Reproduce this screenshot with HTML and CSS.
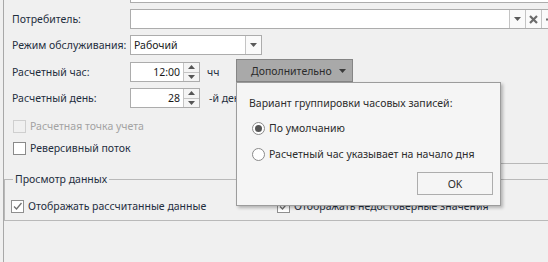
FILE: index.html
```html
<!DOCTYPE html>
<html lang="ru">

<head>
    <meta charset="UTF-8">
    <link rel="stylesheet" href="styles.css">
    <title>Параметры</title>
</head>

<body>

    <div class="frame">
        <div class="row row-top">
            <span class="label"></span>
            <div class="field wide"></div>
        </div>

        <div class="row">
            <span class="label">Потребитель:</span>
            <div class="field wide">
                <span class="field-text lookup-text"></span>
                <span class="btn-cell"><svg width="7" height="4" viewBox="0 0 7 4"><path d="M0 0h7L3.5 4z" fill="#5a5a5a"/></svg></span>
                <span class="btn-cell"><svg width="9" height="9" viewBox="0 0 9 9"><path d="M1 1l7 7M8 1L1 8" stroke="#6b6b6b" stroke-width="2.2"/></svg></span>
                <span class="btn-cell"><svg width="9" height="9" viewBox="0 0 9 9"><path d="M1 4.5h7" stroke="#6b6b6b" stroke-width="2"/></svg></span>
            </div>
        </div>

        <div class="row">
            <span class="label">Режим обслуживания:</span>
            <div class="field combo">
                <span class="field-text">Рабочий</span>
                <span class="btn-cell"><svg width="7" height="4" viewBox="0 0 7 4"><path d="M0 0h7L3.5 4z" fill="#5a5a5a"/></svg></span>
            </div>
        </div>

        <div class="row row-hour">
            <span class="label">Расчетный час:</span>
            <div class="field spin">
                <span class="field-text num">12:00</span>
                <span class="spin-btns">
                    <span class="spin-up"><svg width="7" height="4" viewBox="0 0 7 4"><path d="M0 4h7L3.5 0z" fill="#555"/></svg></span>
                    <span class="spin-down"><svg width="7" height="4" viewBox="0 0 7 4"><path d="M0 0h7L3.5 4z" fill="#555"/></svg></span>
                </span>
            </div>
            <span class="unit">чч</span>
            <button class="more-btn"><span>Дополнительно</span><svg width="7" height="4" viewBox="0 0 7 4"><path d="M0 0h7L3.5 4z" fill="#3a3a3a"/></svg></button>
        </div>

        <div class="row">
            <span class="label">Расчетный день:</span>
            <div class="field spin">
                <span class="field-text num">28</span>
                <span class="spin-btns">
                    <span class="spin-up"><svg width="7" height="4" viewBox="0 0 7 4"><path d="M0 4h7L3.5 0z" fill="#555"/></svg></span>
                    <span class="spin-down"><svg width="7" height="4" viewBox="0 0 7 4"><path d="M0 0h7L3.5 4z" fill="#555"/></svg></span>
                </span>
            </div>
            <span class="unit unit-day">-й день</span>
        </div>

        <label class="check-row check-disabled">
            <span class="check-box"></span>
            Расчетная точка учета
        </label>

        <label class="check-row">
            <span class="check-box"></span>
            Реверсивный поток
        </label>

        <div class="divider-right"></div>

        <fieldset class="group">
            <legend>Просмотр данных</legend>
            <div class="group-checks">
                <label class="check-row check-first">
                    <span class="check-box checked"><svg width="11" height="11" viewBox="0 0 11 11"><path d="M2 5.5l2.5 2.5L9.5 2" fill="none" stroke="#707070" stroke-width="1.3"/></svg></span>
                    Отображать рассчитанные данные
                </label>
                <label class="check-row">
                    <span class="check-box checked"><svg width="11" height="11" viewBox="0 0 11 11"><path d="M2 5.5l2.5 2.5L9.5 2" fill="none" stroke="#707070" stroke-width="1.3"/></svg></span>
                    Отображать недостоверные значения
                </label>
            </div>
        </fieldset>
    </div>

    <div class="popup">
        <div class="popup-title">Вариант группировки часовых записей:</div>
        <label class="radio-row">
            <span class="radio selected"></span>
            По умолчанию
        </label>
        <label class="radio-row">
            <span class="radio"></span>
            Расчетный час указывает на начало дня
        </label>
        <div class="popup-footer">
            <button class="ok-btn">OK</button>
        </div>
    </div>

</body>

</html>
```

FILE: styles.css
```css
* {
    box-sizing: border-box;
}

body {
    margin: 0;
    width: 548px;
    height: 262px;
    overflow: hidden;
    position: relative;
    background-color: #f0f0f0;
    font-family: 'Noto Sans', 'DejaVu Sans', sans-serif;
    font-size: 10.5px;
    color: #1f2e3e;
}

.frame {
    margin-left: 3px;
    height: 262px;
    padding-left: 8px;
    border-left: 1px solid #a8a8a8;
    overflow: hidden;
}

.row {
    display: flex;
    align-items: center;
    height: 20px;
    margin-top: 6px;
}

.row-top {
    margin-top: -17px;
}

.row-hour {
    margin-top: 7px;
}

.label {
    width: 118px;
    flex: none;
    white-space: nowrap;
}

.field {
    display: flex;
    height: 20px;
    border: 1px solid #acacac;
    background-color: #fff;
    flex: none;
}

.wide {
    width: 440px;
}

.field-text {
    flex: 1;
    padding: 0 3px;
    line-height: 18px;
    color: #1a1a1a;
    white-space: nowrap;
}

.lookup-text {
    flex: none;
    width: 378px;
}

.btn-cell {
    width: 16px;
    flex: none;
    display: flex;
    align-items: center;
    justify-content: center;
    border-left: 1px solid #c4c4c4;
    background-color: #fafafa;
}

.combo {
    width: 132px;
}

.spin {
    width: 70px;
}

.num {
    text-align: right;
    padding-right: 3px;
}

.spin-btns {
    width: 16px;
    display: flex;
    flex-direction: column;
    border-left: 1px solid #c4c4c4;
    background-color: #f4f4f4;
}

.spin-up,
.spin-down {
    flex: 1;
    display: flex;
    align-items: center;
    justify-content: center;
}

.spin-up {
    border-bottom: 1px solid #c4c4c4;
}

.unit {
    margin-left: 7px;
    width: 29px;
    flex: none;
    white-space: nowrap;
}

.unit-day {
    margin-left: 9px;
}

.more-btn {
    align-self: flex-end;
    width: 117px;
    height: 23px;
    flex: none;
    margin: 0;
    padding: 0 6px 0 14px;
    display: flex;
    align-items: center;
    justify-content: space-between;
    background-color: #a9a9a9;
    border: 1px solid #858585;
    font-family: inherit;
    font-size: inherit;
    color: #2b2b2b;
}

.check-row {
    display: flex;
    align-items: center;
    gap: 4px;
    height: 16px;
    margin-top: 10px;
    margin-left: 1px;
    white-space: nowrap;
}

.check-row + .check-row {
    margin-top: 6px;
}

.check-box {
    width: 13px;
    height: 13px;
    flex: none;
    display: flex;
    align-items: center;
    justify-content: center;
    border: 1px solid #8a8a8a;
    background-color: #fff;
}

.check-disabled {
    color: #a3a3a3;
}

.check-disabled .check-box {
    border-color: #cfcfcf;
    background-color: #f0f0f0;
}

.divider-right {
    height: 1px;
    width: 240px;
    margin: 7px 0 0 380px;
    background-color: #b8b8b8;
}

.group {
    margin: 7px 0 0 -8px;
    width: 600px;
    padding: 11px 0 6px 8px;
    border: 1px solid #b9b9b9;
}

.group legend {
    padding: 0 2px;
    line-height: 16px;
}

.group-checks {
    display: flex;
    margin-left: -2px;
}

.group-checks .check-row {
    margin: 0;
}

.check-first {
    width: 266px;
}

.checked {
    border-color: #8f8f8f;
}

.popup {
    position: absolute;
    left: 236px;
    top: 82px;
    width: 265px;
    height: 124px;
    padding: 12px 7px 0 12px;
    background-color: #f5f5f5;
    border: 1px solid #9c9c9c;
    box-shadow: 2px 2px 3px rgba(0, 0, 0, 0.25);
    color: #2c2c2c;
}

.popup-title {
    line-height: 16px;
    white-space: nowrap;
}

.radio-row {
    display: flex;
    align-items: center;
    gap: 4px;
    height: 16px;
    margin-top: 9px;
    padding-left: 3px;
    white-space: nowrap;
}

.radio-row + .radio-row {
    margin-top: 10px;
}

.radio {
    width: 13px;
    height: 13px;
    flex: none;
    border-radius: 50%;
    border: 1px solid #8a8a8a;
    background-color: #fff;
    display: flex;
    align-items: center;
    justify-content: center;
}

.radio.selected::after {
    content: '';
    width: 7px;
    height: 7px;
    border-radius: 50%;
    background-color: #555;
}

.popup-footer {
    display: flex;
    justify-content: flex-end;
    margin-top: 10px;
}

.ok-btn {
    width: 76px;
    height: 23px;
    margin: 0;
    border: 1px solid #adadad;
    background-color: #f5f5f5;
    font-family: inherit;
    font-size: inherit;
    color: #2c2c2c;
}
```
